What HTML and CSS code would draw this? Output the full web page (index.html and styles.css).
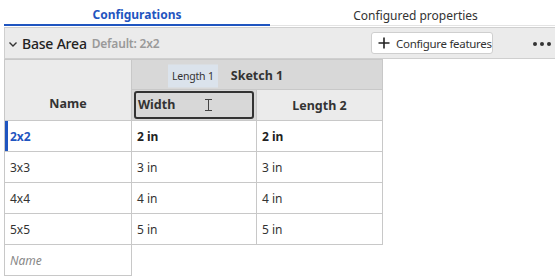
FILE: index.html
```html
<!DOCTYPE html>
<html>
<head>
<meta charset="utf-8">
<link rel="stylesheet" href="styles.css">
</head>
<body>
<div class="page">
  <div class="tabs">
    <div class="tab active">Configurations</div>
    <div class="tab">Configured properties</div>
  </div>
  <div class="section-header">
    <svg class="chevron" width="10" height="8" viewBox="0 0 10 8"><path d="M1.5 2.5 L5 6 L8.5 2.5" fill="none" stroke="#333" stroke-width="1.4"/></svg>
    <span class="title">Base Area</span>
    <span class="default">Default: 2x2</span>
    <span class="spacer"></span>
    <button class="cfg-btn"><svg width="12" height="12" viewBox="0 0 12 12"><path d="M6 0.5 V11.5 M0.5 6 H11.5" stroke="#222" stroke-width="1.6"/></svg><span>Configure features</span></button>
    <span class="dots"><i></i><i></i><i></i></span>
  </div>
  <table class="grid">
    <colgroup><col class="c1"><col class="c2"><col class="c3"></colgroup>
    <thead>
      <tr class="h1">
        <th rowspan="2" class="name-h">Name</th>
        <th colspan="2" class="group"><span class="group-title"><span class="badge">Length 1</span>Sketch 1</span></th>
      </tr>
      <tr class="h2">
        <th class="sel"><div class="sel-box">Width<span class="ibeam"></span></div></th>
        <th class="param">Length 2</th>
      </tr>
    </thead>
    <tbody>
      <tr class="current"><td class="nm">2x2</td><td>2 in</td><td>2 in</td></tr>
      <tr><td class="nm">3x3</td><td>3 in</td><td>3 in</td></tr>
      <tr><td class="nm">4x4</td><td>4 in</td><td>4 in</td></tr>
      <tr><td class="nm">5x5</td><td>5 in</td><td>5 in</td></tr>
      <tr class="new"><td class="nm placeholder">Name</td><td class="empty"></td><td class="empty"></td></tr>
    </tbody>
  </table>
</div>
</body>
</html>
```
FILE: styles.css
```css
* { box-sizing: border-box; }
html, body { margin: 0; padding: 0; background: #fff; }
body { font-family: "Noto Sans", "Inter", "Liberation Sans", sans-serif; color: #333; }
.page { width: 555px; height: 279px; overflow: hidden; }
.tabs { display: flex; height: 26px; margin-left: 4px; border-bottom: 1px solid #e3e3e3; }
.tab { font-size: 12px; display: flex; align-items: center; justify-content: center; padding-top: 5px; }
.tab:first-child { width: 266px; color: #1f55c0; font-weight: 700; border-bottom: 2px solid #1f55c0; margin-bottom: -1px; }
.tab:last-child { flex: 1; color: #333; padding-left: 6px; }
.section-header { margin: 1px 0 0 4px; height: 32px; background: #ebebeb; border: 1px solid #cfcfcf; border-right: none; display: flex; align-items: center; padding-left: 3px; }
.chevron { margin-right: 4px; margin-top: 2px; }
.title { font-size: 14px; font-weight: 500; color: #222; letter-spacing: -0.2px; }
.default { font-size: 12px; font-weight: 600; color: #9a9a9a; margin-left: 5px; letter-spacing: -0.2px; }
.spacer { flex: 1; }
.cfg-btn { display: flex; align-items: center; gap: 6px; height: 22px; width: 122px; padding: 0 0 0 6px; background: #fff; border: 1px solid #cfcfcf; border-radius: 3px; font-family: inherit; font-size: 11.5px; color: #333; white-space: nowrap; letter-spacing: -0.3px; }
.dots { display: flex; gap: 3px; margin: 2px 4px 0 40px; }
.dots i { width: 4px; height: 4px; border-radius: 50%; background: #333; display: block; }
.grid { margin-left: 4px; border-collapse: collapse; table-layout: fixed; width: 378px; font-size: 12px; }
.c1 { width: 127px; } .c2 { width: 125px; } .c3 { width: 126px; }
.grid th, .grid td { border: 1px solid #c8c8c8; padding: 0 5px; }
.grid th { font-weight: 700; color: #333; font-size: 12.5px; }
.h1 { height: 30px; }
.h2 { height: 31px; }
.name-h { background: #ebebeb; text-align: center; padding-top: 26px !important; }
.group { background: #d8d8d8; text-align: center; }
.group-title { position: relative; display: inline-block; top: 1px; }
.badge { position: absolute; right: calc(100% + 13px); top: 50%; transform: translateY(-50%); white-space: nowrap; background: #dbe3ec; font-weight: 400; font-size: 10.5px; letter-spacing: -0.2px; height: 23px; line-height: 23px; padding: 0 4px; color: #333; }
.sel { background: #d8d8d8; padding: 1px 2px !important; }
.sel-box { position: relative; height: 28px; border: 2px solid #333; border-radius: 3px; text-align: left; line-height: 24px; padding-left: 2px; }
.ibeam { position: absolute; left: 69px; top: 6px; width: 6px; height: 12px; }
.ibeam::before { content: ""; position: absolute; left: 3px; top: 0; width: 1px; height: 12px; background: #444; }
.ibeam::after { content: ""; position: absolute; left: 0; top: 0; width: 7px; height: 12px; border-top: 1px solid #444; border-bottom: 1px solid #444; box-sizing: border-box; }
.param { background: #ebebeb; text-align: center; }
tbody tr { height: 31px; }
tbody td { color: #333; }
.current td { font-weight: 700; color: #222; }
.current td.nm { color: #1f55c0; box-shadow: inset 3px 0 0 #1f55c0; }
.placeholder { color: #888 !important; font-style: italic; }
.grid td.empty { border: none; border-top: 1px solid #c8c8c8; }
```
